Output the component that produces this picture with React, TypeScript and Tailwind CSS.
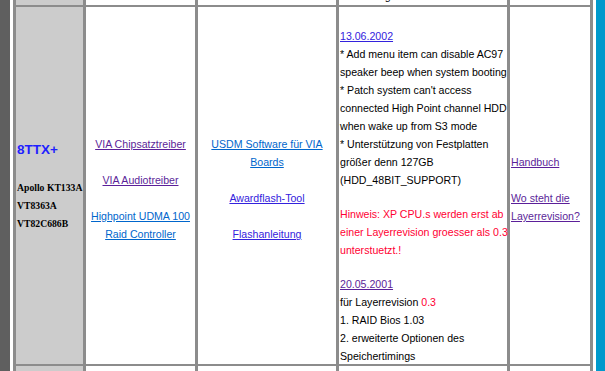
export default function App() {
  const purple = "text-[#5b1f99] underline";
  const violet = "text-[#3322dd] underline";
  const blue = "text-[#0066cc] underline";
  return (
    <div className="flex h-[371px] w-[605px] overflow-hidden bg-white font-['Liberation_Sans',Arial,sans-serif] text-[10.6px] leading-[18px] text-black">
      <div className="w-[10px] shrink-0 bg-[#5f5f5f]" />
      <div className="w-[3px] shrink-0 bg-white" />
      <div className="grid shrink-0 grid-cols-[67px_109px_138px_168px_80px] grid-rows-[5px_357px_5px] gap-x-[3px] gap-y-[2px] bg-[#8c8c8c] px-[3px]">
        {/* top row (cut off) */}
        <div className="bg-[#cccccc]" />
        <div className="bg-white" />
        <div className="bg-white" />
        <div className="overflow-hidden bg-white pl-[1px]">
          <div className="-mt-[13px] whitespace-nowrap">in Nutzung</div>
        </div>
        <div className="bg-white" />

        {/* main row */}
        <div className="bg-[#cccccc] pl-[1px] pt-[134px]">
          <div className="whitespace-nowrap text-[13.5px] font-bold leading-[18px] text-[#1f1fff]">8TTX+</div>
          <div className="mt-[20px] whitespace-nowrap font-['Liberation_Serif','Times_New_Roman',serif] text-[9.7px] font-bold leading-[18px]">
            <div>Apollo KT133A</div>
            <div>VT8363A</div>
            <div>VT82C686B</div>
          </div>
        </div>

        <div className="bg-white pt-[128px] text-center whitespace-nowrap">
          <div><span className={purple}>VIA Chipsatztreiber</span></div>
          <div className="h-[18px]" />
          <div><span className={purple}>VIA Audiotreiber</span></div>
          <div className="h-[18px]" />
          <div><span className={blue}>Highpoint UDMA 100</span></div>
          <div><span className={blue}>Raid Controller</span></div>
        </div>

        <div className="bg-white pt-[128px] text-center whitespace-nowrap">
          <div><span className={blue}>USDM Software für VIA</span></div>
          <div><span className={blue}>Boards</span></div>
          <div className="h-[18px]" />
          <div><span className={violet}>Awardflash-Tool</span></div>
          <div className="h-[18px]" />
          <div><span className={violet}>Flashanleitung</span></div>
        </div>

        <div className="bg-white pl-[1px] pt-[20px] whitespace-nowrap">
          <div><span className={violet}>13.06.2002</span></div>
          <div>* Add menu item can disable AC97</div>
          <div>speaker beep when system booting</div>
          <div>* Patch system can't access</div>
          <div>connected High Point channel HDD</div>
          <div>when wake up from S3 mode</div>
          <div>* Unterstützung von Festplatten</div>
          <div>größer denn 127GB</div>
          <div>(HDD_48BIT_SUPPORT)</div>
          <div className="h-[16px]" />
          <div className="text-[#ff0033]">
            <div>Hinweis: XP CPU.s werden erst ab</div>
            <div>einer Layerrevision groesser als 0.3</div>
            <div>unterstuetzt.!</div>
          </div>
          <div className="h-[16px]" />
          <div><span className={purple}>20.05.2001</span></div>
          <div>
            für Layerrevision <span className="text-[#ff0033]">0.3</span>
          </div>
          <div>1. RAID Bios 1.03</div>
          <div>2. erweiterte Optionen des</div>
          <div>Speichertimings</div>
        </div>

        <div className="bg-white pl-[1px] pt-[146px] whitespace-nowrap">
          <div><span className={purple}>Handbuch</span></div>
          <div className="h-[18px]" />
          <div><span className={purple}>Wo steht die</span></div>
          <div><span className={purple}>Layerrevision?</span></div>
        </div>

        {/* next row (cut off) */}
        <div className="bg-[#cccccc]" />
        <div className="bg-white" />
        <div className="bg-white" />
        <div className="bg-white" />
        <div className="bg-white" />
      </div>
      <div className="w-[3px] shrink-0 bg-white" />
      <div className="w-[9px] shrink-0 bg-[#0099cc]" />
    </div>
  );
}
